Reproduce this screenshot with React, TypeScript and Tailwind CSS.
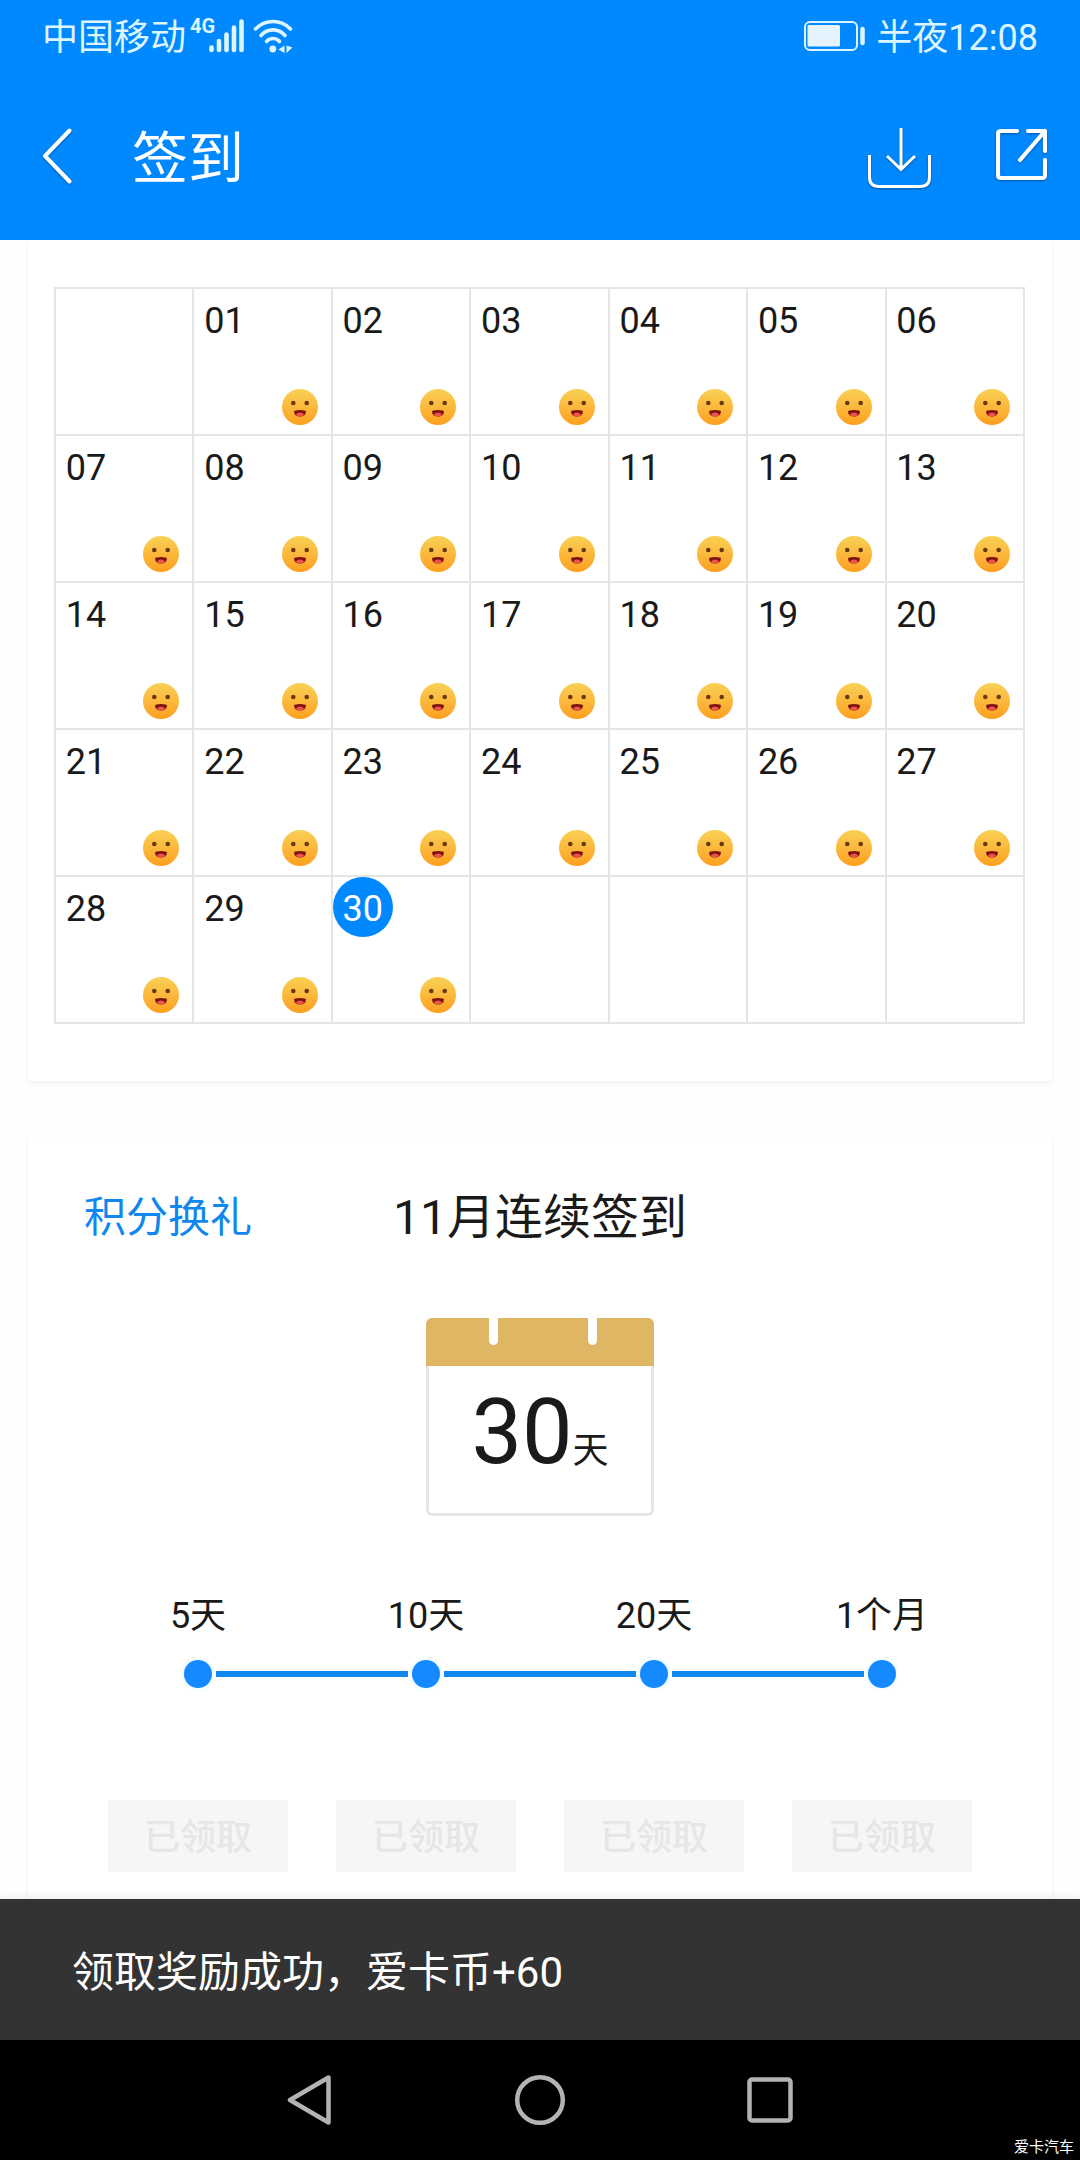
import type { ReactNode } from "react";
import { clsx } from "clsx";

interface Step {
  label: string;
  action: string;
}

// ── Data ───────────────────────────────────────────────────────────────────────

const DAYS_IN_MONTH = 30;
const FIRST_WEEKDAY = 1;
const TODAY = 30;

const WEEKS: (number | null)[][] = Array.from({ length: 5 }, (_, week) =>
  Array.from({ length: 7 }, (_, weekday) => {
    const day = week * 7 + weekday - FIRST_WEEKDAY + 1;
    return day >= 1 && day <= DAYS_IN_MONTH ? day : null;
  })
);

const STEPS: Step[] = [
  { label: "5天", action: "已领取" },
  { label: "10天", action: "已领取" },
  { label: "20天", action: "已领取" },
  { label: "1个月", action: "已领取" },
];

// ── Status bar ─────────────────────────────────────────────────────────────────

function SignalIcon() {
  return (
    <svg className="-ml-1.5 h-9 w-9" viewBox="0 0 36 36" stroke="currentColor" strokeWidth="4.6" strokeLinecap="round">
      <path d="M2.5 29.5V32M10 23v9M17.5 16.500v15.500M25 9.500V32M32.500 3.500V32" />
    </svg>
  );
}

function WifiIcon() {
  return (
    <svg className="ml-2 h-9 w-10" viewBox="0 0 40 36" fill="none" stroke="currentColor" strokeWidth="3.6" strokeLinecap="round">
      <path d="M2.500 11C12 1 28 1 37.500 11" />
      <path d="M8 17.500C14.500 10 25.500 10 32 17.500" />
      <path d="M13.500 23.500C17 19.500 23 19.500 26.500 23.500" />
      <circle cx="19.800" cy="31" r="3.400" fill="currentColor" stroke="none" />
      <path d="M31.500 27.500V35L25.500 31.500ZM33.500 35V27.500L39.500 29.500Z" fill="currentColor" stroke="none" />
    </svg>
  );
}

function BatteryIcon() {
  return (
    <svg className="mr-2.5 h-[30px] w-[62px]" viewBox="0 0 62 30" fill="none">
      <rect x="1" y="1" width="52" height="28" rx="5" stroke="currentColor" strokeWidth="2" />
      <rect x="3.500" y="4" width="32.500" height="21.500" rx="1.500" fill="#e5f3ff" />
      <path d="M58.500 8v14" stroke="currentColor" strokeWidth="4.500" strokeLinecap="round" />
    </svg>
  );
}

function StatusBar() {
  return (
    <div className="flex h-[72px] items-center justify-between px-[42px] text-4xl leading-[48px] text-[#dcf5ff]">
      <div className="flex items-center">
        <span className="pt-1">中国移动</span>
        <span className="ml-1 self-start text-xl leading-8 font-bold">4G</span>
        <SignalIcon />
        <WifiIcon />
      </div>
      <div className="flex items-center">
        <BatteryIcon />
        <span className="pt-1">半夜12:08</span>
      </div>
    </div>
  );
}

// ── Title bar ──────────────────────────────────────────────────────────────────

function IconButton({ label, children }: { label: string; children: ReactNode }) {
  return (
    <button type="button" aria-label={label} className="shrink-0 drop-shadow-[0_1px_1px_rgba(0,0,0,0.35)]">
      {children}
    </button>
  );
}

function TitleBar() {
  return (
    <div className="flex h-[168px] items-center pr-[33px] pl-[42px]">
      <IconButton label="返回">
        <svg className="h-14 w-[30px]" viewBox="0 0 30 56" fill="none" stroke="currentColor" strokeWidth="4" strokeLinecap="round" strokeLinejoin="round">
          <path d="M27.500 2.500L3 28L27.500 53.500" />
        </svg>
      </IconButton>
      <h1 className="ml-[60px] flex-1 pt-1.5 text-[56px] leading-[72px]">签到</h1>
      <div className="flex items-center gap-[65px]">
        <IconButton label="下载">
          <svg className="h-[66px] w-[63px]" viewBox="0 0 63 66" fill="none" stroke="currentColor" strokeWidth="3">
            <path d="M1.500 32V54Q1.500 63.500 11 63.500H52Q61.500 63.500 61.500 54V32" />
            <path d="M33 5V46M19 33L33 46.500L47 33" />
          </svg>
        </IconButton>
        <IconButton label="分享">
          <svg className="h-[66px] w-[51px]" viewBox="0 0 51 66" fill="none" stroke="currentColor" strokeWidth="4.2" strokeLinecap="round" strokeLinejoin="round">
            <path d="M21 8H5Q2 8 2 11V52Q2 55 5 55H46Q49 55 49 52V37" />
            <path d="M32 8H49V28M49 8L24 37" />
          </svg>
        </IconButton>
      </div>
    </div>
  );
}

// ── Calendar ───────────────────────────────────────────────────────────────────

function Smiley() {
  return (
    <svg className="h-9 w-9 rounded-full bg-linear-to-b from-[#f8d155] to-[#fd9f1c]" viewBox="0 0 36 36">
      <circle cx="11.300" cy="14" r="2.300" fill="#6b3a0c" />
      <circle cx="24.700" cy="14" r="2.300" fill="#6b3a0c" />
      <path d="M12 22.500Q12.500 21 18 21T24 22.500Q23.500 27.500 18 27.500T12 22.500Z" fill="#7d1210" />
      <path d="M13.800 25.500Q18 21.500 22.200 25.500Q20.500 27.500 18 27.500T13.800 25.500Z" fill="#ef5350" />
    </svg>
  );
}

function DayCell({ day }: { day: number | null }) {
  return (
    <td className="h-[147px] border-2 border-[#e5e5e5] p-0">
      {day !== null && (
        <div className="flex h-[145px] flex-col justify-between pb-[9px]">
          <span
            className={clsx(
              "flex h-[60px] w-[60px] items-center justify-center rounded-full pt-1 text-4xl leading-[48px]",
              day === TODAY ? "bg-[#0088ff] text-white" : "text-[#1a1a1a]"
            )}
          >
            {String(day).padStart(2, "0")}
          </span>
          <span className="self-end pr-[13px]">
            <Smiley />
          </span>
        </div>
      )}
    </td>
  );
}

function CalendarCard() {
  return (
    <section className="bg-white pt-[47px] pr-[27px] pb-[57px] pl-[26px] shadow-[0_2px_4px_rgba(0,0,0,0.06)]">
      <table aria-label="签到" className="w-full table-fixed border-collapse">
        <tbody>
          {WEEKS.map((week, wi) => (
            <tr key={wi}>
              {week.map((day, di) => (
                <DayCell key={di} day={day} />
              ))}
            </tr>
          ))}
        </tbody>
      </table>
    </section>
  );
}

// ── Streak rewards ─────────────────────────────────────────────────────────────

function StreakBadge() {
  return (
    <div className="mx-auto mt-[70px] w-[228px] overflow-hidden rounded-md">
      <div className="flex h-12 gap-[90px] bg-[#dfb664] pl-[63px]">
        <span className="h-[27px] w-[9px] rounded-b-full bg-white" />
        <span className="h-[27px] w-[9px] rounded-b-full bg-white" />
      </div>
      <div className="flex h-[150px] items-baseline justify-center rounded-b-md border-x-3 border-b-3 border-[#e5e5e5] pt-[22px]">
        <span className="text-[90px] leading-[90px]">30</span>
        <span className="text-4xl leading-[48px]">天</span>
      </div>
    </div>
  );
}

function StreakCard() {
  return (
    <section className="bg-white px-14 pt-[51px] pb-[27px] text-[#1a1a1a] shadow-[0_1px_4px_rgba(0,0,0,0.06)]">
      <div className="grid grid-cols-[1fr_auto_1fr] items-center leading-[60px]">
        <a href="#gifts" className="text-[42px] text-[#0f87ee]">积分换礼</a>
        <h2 className="text-5xl leading-[60px]">11月连续签到</h2>
      </div>

      <StreakBadge />

      <div className="mt-[76px] grid grid-cols-4 text-center text-4xl leading-[48px]">
        {STEPS.map(step => (
          <span key={step.label}>{step.label}</span>
        ))}
      </div>

      {/* Progress line */}
      <div className="mt-5 flex items-center gap-1 px-[100px]">
        {STEPS.map((step, i) => (
          <div key={step.label} className={clsx("flex items-center gap-1", i > 0 && "flex-1")}>
            {i > 0 && <span className="h-1.5 flex-1 bg-[#0f87ee]" />}
            <span className="h-7 w-7 rounded-full bg-[#158aff] ring-3 ring-[#f4fcff]" />
          </div>
        ))}
      </div>

      <div className="mt-28 grid grid-cols-4 justify-items-center">
        {STEPS.map(step => (
          <button
            key={step.label}
            type="button"
            disabled
            className="h-[72px] w-[180px] bg-[#f6f6f6] pt-1 text-4xl leading-[48px] font-medium text-[#e6e6e6]"
          >
            {step.action}
          </button>
        ))}
      </div>
    </section>
  );
}

// ── System navigation ──────────────────────────────────────────────────────────

function NavBar() {
  return (
    <nav className="relative flex h-[120px] items-center justify-center gap-[181px] bg-black text-[#b3b3b3]">
      <button type="button" aria-label="后退">
        <svg className="h-[52px] w-[46px]" viewBox="0 0 46 52" fill="none" stroke="currentColor" strokeWidth="4.500" strokeLinejoin="round">
          <path d="M41.500 3.500V48.500L3 26Z" />
        </svg>
      </button>
      <button type="button" aria-label="主屏幕">
        <svg className="h-[52px] w-[52px]" viewBox="0 0 52 52" fill="none" stroke="currentColor" strokeWidth="4.500">
          <circle cx="26" cy="26" r="22.800" />
        </svg>
      </button>
      <button type="button" aria-label="最近任务">
        <svg className="h-[46px] w-[46px]" viewBox="0 0 46 46" fill="none" stroke="currentColor" strokeWidth="4.500">
          <rect x="2.500" y="2.500" width="41" height="41" rx="2.500" />
        </svg>
      </button>
      <span className="absolute right-1.5 bottom-1 text-[15px] leading-[18px] text-white">爱卡汽车</span>
    </nav>
  );
}

// ── App ────────────────────────────────────────────────────────────────────────

export default function App() {
  return (
    <div className="flex min-h-screen flex-col bg-[#fefefe] font-[Roboto,'Noto_Sans_CJK_SC',sans-serif]">
      <header className="relative bg-[#0088ff] text-white">
        <StatusBar />
        <TitleBar />
      </header>
      <main className="flex flex-1 flex-col gap-14 px-7">
        <CalendarCard />
        <StreakCard />
      </main>
      <div role="status" className="relative bg-[#333333] px-[72px] pt-[45px] pb-[39px] text-[42px] leading-[57px] text-white shadow-[0_-2px_8px_rgba(0,0,0,0.08)]">
        领取奖励成功，爱卡币+60
      </div>
      <NavBar />
    </div>
  );
}
